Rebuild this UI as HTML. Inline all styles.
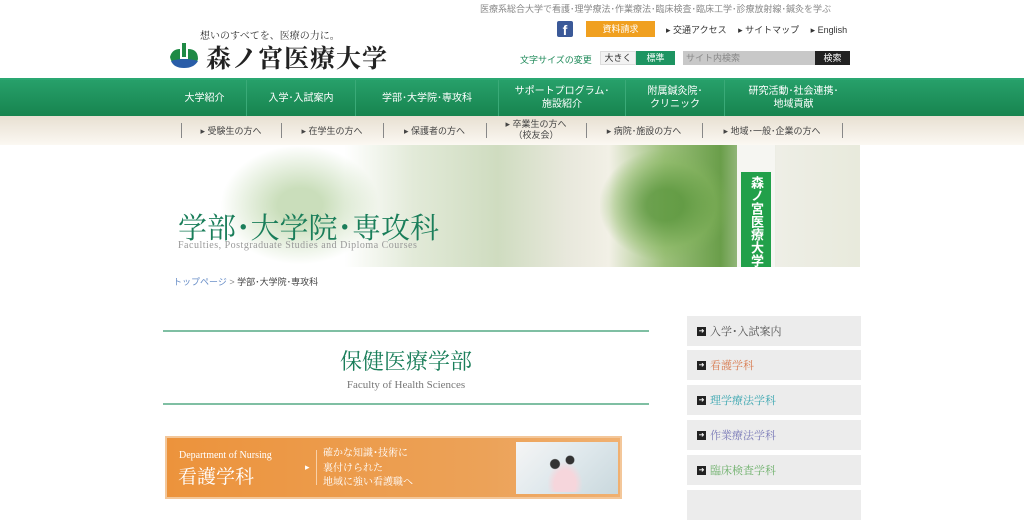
<!DOCTYPE html>
<html><head><meta charset="utf-8"><style>
*{margin:0;padding:0;box-sizing:border-box}
body{width:1024px;height:499px;overflow:hidden;background:#fff;font-family:"Liberation Sans","Noto Sans CJK JP",sans-serif;position:relative;color:#333}
.a{position:absolute;white-space:nowrap}
.serif{font-family:"Liberation Serif","Noto Serif CJK SC",serif}
.nav{position:absolute;left:0;top:78px;width:1024px;height:38px;background:linear-gradient(#27a06a,#17844f);border-top:2px solid #2aa872}
.nav div{position:absolute;top:0;height:36px;color:#fff;font-size:10px;text-align:center;display:flex;align-items:center;justify-content:center;line-height:13px;border-right:1px solid #3aaa78}
.sub{position:absolute;left:0;top:116px;width:1024px;height:29px;background:linear-gradient(#e8e0d2,#fbf8f2)}
.sub span{position:absolute;font-size:9px;color:#444;line-height:11px;text-align:center}
.bar{position:absolute;top:123px;width:1px;height:15px;background:#888}
.side{position:absolute;left:687px;width:174px;height:30px;background:#ececec;font-size:11px;display:flex;align-items:center;padding-left:10px}
.side i{display:inline-block;width:9px;height:9px;background:#222;margin-right:4px;color:#fff;font-size:7px;line-height:9px;text-align:center;font-style:normal}
</style></head><body>
<div class="a" style="left:480px;top:2px;font-size:9px;color:#888">医療系総合大学で看護･理学療法･作業療法･臨床検査･臨床工学･診療放射線･鍼灸を学ぶ</div>
<div class="a serif" style="left:200px;top:27px;font-size:10px;color:#333">想いのすべてを、医療の力に。</div>
<svg class="a" style="left:168px;top:41px" width="32" height="28" viewBox="0 0 32 28"><path d="M2 16 Q4 8 12 8 L12 18 L20 18 L20 8 Q30 8 30 18 Q28 26 16 26 Q4 26 2 16Z" fill="#1f8a45"/><path d="M3 20 Q16 16 30 20 Q26 27 16 27 Q6 27 3 20Z" fill="#2a5da8"/><rect x="14" y="2" width="4" height="14" fill="#1f8a45"/></svg>
<div class="a serif" style="left:206px;top:39px;font-size:25px;font-weight:bold;color:#222;letter-spacing:1px">森ノ宮医療大学</div>
<div class="a" style="left:557px;top:21px;width:16px;height:16px;background:#3b5998;border-radius:2px;color:#fff;font-weight:bold;font-size:14px;text-align:center;line-height:18px">f</div>
<div class="a" style="left:586px;top:21px;width:69px;height:16px;background:#f0a020;color:#fff;font-size:9px;text-align:center;line-height:16px">資料請求</div>
<div class="a" style="left:666px;top:23px;font-size:9px;color:#333">▸ 交通アクセス　 ▸ サイトマップ　 ▸ English</div>
<div class="a" style="left:520px;top:53px;font-size:9px;color:#1f8a5a">文字サイズの変更</div>
<div class="a" style="left:600px;top:51px;width:36px;height:14px;background:#f2f2f2;border:1px solid #ddd;font-size:9px;text-align:center;line-height:12px">大きく</div>
<div class="a" style="left:636px;top:51px;width:39px;height:14px;background:#1d9461;color:#fff;font-size:9px;text-align:center;line-height:14px">標準</div>
<div class="a" style="left:683px;top:51px;width:132px;height:14px;background:#c8c8c8;color:#888;font-size:9px;line-height:14px;padding-left:3px">サイト内検索</div>
<div class="a" style="left:815px;top:51px;width:35px;height:14px;background:#222;color:#fff;font-size:9px;text-align:center;line-height:14px">検索</div>
<div class="nav">
<div style="left:163px;width:84px">大学紹介</div>
<div style="left:247px;width:109px">入学･入試案内</div>
<div style="left:356px;width:143px">学部･大学院･専攻科</div>
<div style="left:499px;width:127px">サポートプログラム･<br>施設紹介</div>
<div style="left:626px;width:99px">附属鍼灸院･<br>クリニック</div>
<div style="left:725px;width:137px;border-right:none">研究活動･社会連携･<br>地域貢献</div>
</div>
<div class="sub">
<span style="left:181px;width:100px;top:10px">▸ 受験生の方へ</span>
<span style="left:281px;width:102px;top:10px">▸ 在学生の方へ</span>
<span style="left:383px;width:103px;top:10px">▸ 保護者の方へ</span>
<span style="left:486px;width:100px;top:3px">▸ 卒業生の方へ<br>（校友会）</span>
<span style="left:586px;width:116px;top:10px">▸ 病院･施設の方へ</span>
<span style="left:702px;width:140px;top:10px">▸ 地域･一般･企業の方へ</span>
</div>
<div class="bar" style="left:181px"></div><div class="bar" style="left:281px"></div><div class="bar" style="left:383px"></div><div class="bar" style="left:486px"></div><div class="bar" style="left:586px"></div><div class="bar" style="left:702px"></div><div class="bar" style="left:842px"></div>
<div class="a" style="left:163px;top:145px;width:697px;height:122px;background:linear-gradient(90deg,#fff 0%,#fff 26%,#e2ead8 36%,#cfdcc0 48%,#e8e8dc 58%,#f2f0e6 64%,#9cc07a 72%,#6a9e4a 80%,#eeeee6 88%,#e8eadc 100%)"></div>
<div class="a" style="left:220px;top:145px;width:160px;height:120px;background:radial-gradient(ellipse,rgba(150,190,120,.5) 20%,transparent 70%)"></div>
<div class="a" style="left:600px;top:150px;width:130px;height:110px;background:radial-gradient(ellipse,rgba(90,150,60,.8) 20%,rgba(130,180,90,.4) 55%,transparent 72%)"></div>
<div class="a" style="left:737px;top:145px;width:38px;height:122px;background:#f6f6f2"></div>
<div class="a" style="left:741px;top:172px;width:30px;height:95px;background:#22a04a;color:#fff;font-size:13px;font-weight:bold;writing-mode:vertical-rl;line-height:30px;padding-top:4px">森ノ宮医療大学</div>
<div class="a serif" style="left:178px;top:206px;font-size:29px;color:#1a7e5a">学部･大学院･専攻科</div>
<div class="a serif" style="left:178px;top:240px;font-size:10px;color:#999;letter-spacing:.5px">Faculties, Postgraduate Studies and Diploma Courses</div>
<div class="a" style="left:173px;top:275px;font-size:9px;color:#888"><span style="color:#6a8fc8">トップページ</span> &gt; <span style="color:#444">学部･大学院･専攻科</span></div>
<div class="a" style="left:163px;top:330px;width:486px;height:2px;background:#7fbfa3"></div>
<div class="a serif" style="left:163px;top:345px;width:486px;text-align:center;font-size:22px;color:#1a7e5a">保健医療学部</div>
<div class="a serif" style="left:163px;top:379px;width:486px;text-align:center;font-size:11px;color:#777">Faculty of Health Sciences</div>
<div class="a" style="left:163px;top:403px;width:486px;height:2px;background:#7fbfa3"></div>
<div class="a" style="left:165px;top:436px;width:457px;height:63px;background:linear-gradient(90deg,#ec933c,#eca258 70%,#f0b070);border:2px solid #f3c79a"></div>
<div class="a serif" style="left:179px;top:450px;font-size:10px;color:#fff">Department of Nursing</div>
<div class="a serif" style="left:178px;top:462px;font-size:19px;color:#fff">看護学科</div>
<div class="a" style="left:305px;top:462px;font-size:9px;color:#fff">▸</div>
<div class="a" style="left:316px;top:450px;width:1px;height:35px;background:#f8d0a8"></div>
<div class="a serif" style="left:323px;top:447px;font-size:10px;color:#fff;line-height:14.5px">確かな知識･技術に<br>裏付けられた<br>地域に強い看護職へ</div>
<div class="a" style="left:516px;top:442px;width:102px;height:52px;background:linear-gradient(135deg,#f5f5f5,#dfe8ec 50%,#c9d8dd)"></div>
<div class="a" style="left:540px;top:452px;width:50px;height:40px;background:radial-gradient(circle at 30% 30%,#333 10%,transparent 12%),radial-gradient(circle at 60% 20%,#333 9%,transparent 11%),radial-gradient(ellipse at 50% 80%,#f6d6dc 30%,transparent 50%)"></div>
<div class="side serif" style="top:316px;color:#555"><i>➜</i>入学･入試案内</div>
<div class="side serif" style="top:350px;color:#d87b50"><i>➜</i>看護学科</div>
<div class="side serif" style="top:385px;color:#3aa6b0"><i>➜</i>理学療法学科</div>
<div class="side serif" style="top:420px;color:#7a7ab8"><i>➜</i>作業療法学科</div>
<div class="side serif" style="top:455px;color:#6db06a"><i>➜</i>臨床検査学科</div>
<div class="side" style="top:490px"></div>
</body></html>
